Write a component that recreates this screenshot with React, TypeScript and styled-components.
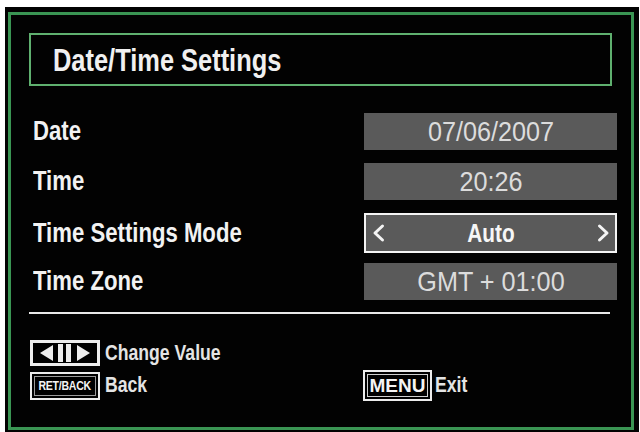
import { createGlobalStyle } from "styled-components";
import styled from "styled-components";

// The TV menu font is an Arial Narrow look-alike; Liberation Sans squeezed
// horizontally gives the same metrics (Narrow is ~82% of the regular width).
const GlobalStyle = createGlobalStyle`
    html, body
    {
        margin: 0;
        padding: 0;
        background: #ffffff;
    }

    body
    {
        width: 640px;
        height: 432px;
        overflow: hidden;
        font-family: "Liberation Sans", Arial, sans-serif;
    }
`;

interface ISetting
{
    label : string
    value : string
    selected? : boolean
}

const settings : ISetting[] =
[
    { label: "Date", value: "07/06/2007" },
    { label: "Time", value: "20:26" },
    { label: "Time Settings Mode", value: "Auto", selected: true },
    { label: "Time Zone", value: "GMT + 01:00" },
];

const Chevron = ({ dir } : { dir : "left" | "right" }) => (
    <svg width="13" height="20" viewBox="0 0 13 20">
        <polyline
            points={dir === "left" ? "10.5,3 3,10 10.5,17" : "2.5,3 10,10 2.5,17"}
            fill="none"
            stroke="#f4f4f4"
            strokeWidth="3"
            strokeLinecap="round"
            strokeLinejoin="round"
        />
    </svg>
);

const ArrowKeys = () => (
    <svg width="70" height="26" viewBox="0 0 70 26">
        <rect x="1.5" y="1.5" width="67" height="23" fill="#000" stroke="#ededed" strokeWidth="3" />
        <polygon points="10,13 23,5 23,21" fill="#ededed" />
        <rect x="28" y="4" width="5" height="18" fill="#ededed" />
        <rect x="36" y="4" width="5" height="18" fill="#ededed" />
        <polygon points="60,13 47,5 47,21" fill="#ededed" />
    </svg>
);

export default function App()
{
    return (
        <>
            <GlobalStyle />
            <Panel>
                <Frame>
                    <TitleBox>
                        <Title>Date/Time Settings</Title>
                    </TitleBox>

                    <Rows>
                        {settings.map(s => (
                            <Row key={s.label}>
                                <Label>{s.label}</Label>
                                <ValueBox selected={s.selected}>
                                    {s.selected && <Chevron dir="left" />}
                                    <Value selected={s.selected}>{s.value}</Value>
                                    {s.selected && <Chevron dir="right" />}
                                </ValueBox>
                            </Row>
                        ))}
                    </Rows>

                    <Separator />

                    <Legend>
                        <LegendItem>
                            <ArrowKeys />
                            <LegendText>Change Value</LegendText>
                        </LegendItem>
                        <LegendItem>
                            <KeyBox width="70px" height="28px">
                                <KeyInner small>
                                    <KeyLabel>RET/BACK</KeyLabel>
                                </KeyInner>
                            </KeyBox>
                            <LegendText>Back</LegendText>
                        </LegendItem>
                        <MenuItem>
                            <KeyBox width="69px" height="31px">
                                <KeyInner>MENU</KeyInner>
                            </KeyBox>
                            <LegendText>Exit</LegendText>
                        </MenuItem>
                    </Legend>
                </Frame>
            </Panel>
        </>
    );
}

const Panel = styled.div`
    box-sizing: border-box;
    margin: 7px 0 0 5px;
    width: 634px;
    height: 425px;
    padding: 5px 5px 2px 3px;
    background: #020202;
`;

const Frame = styled.div`
    box-sizing: border-box;
    height: 100%;
    border: 3px solid #3a9553;
    padding: 18px 14px 0 18px;
`;

const TitleBox = styled.div`
    box-sizing: border-box;
    display: flex;
    align-items: center;
    height: 53px;
    margin-right: 5px;
    padding: 3px 0 0 22px;
    border: 2px solid #5fb06f;
`;

const Narrow = styled.span<{ squeeze? : number, origin? : string }>`
    display: inline-block;
    white-space: nowrap;
    transform: scaleX(${props => props.squeeze ?? 0.82});
    transform-origin: ${props => props.origin ?? "left center"};
`;

const Title = styled(Narrow)`
    color: #f0f0f0;
    font-size: 31px;
    font-weight: bold;
`;

const Rows = styled.div`
    display: flex;
    flex-direction: column;
    gap: 13px;
    margin-top: 27px;
`;

const Row = styled.div`
    display: grid;
    grid-template-columns: 1fr 253px;
    align-items: center;
    height: 37px;
    padding-left: 4px;
`;

const Label = styled(Narrow)`
    color: #f2f2f2;
    font-size: 27px;
    font-weight: bold;
`;

const ValueBox = styled.div<{ selected? : boolean }>`
    box-sizing: border-box;
    display: flex;
    align-items: center;
    justify-content: space-between;
    height: ${props => props.selected ? "40px" : "37px"};
    padding: 0 5px 0 6px;
    background: #5a5a5a;
    border: ${props => props.selected ? "2px solid #f4f4f4" : "none"};
`;

const Value = styled(Narrow).attrs({ origin: "center" })<{ selected? : boolean }>`
    flex: 1;
    text-align: center;
    transform: scaleX(${props => props.selected ? 0.8 : 0.9});
    color: ${props => props.selected ? "#f6f6f6" : "#dcdcdc"};
    font-size: ${props => props.selected ? "26px" : "28px"};
    font-weight: ${props => props.selected ? "bold" : "normal"};
`;

const Separator = styled.div`
    width: 581px;
    height: 2px;
    margin-top: 12px;
    background: #e8e8e8;
`;

const Legend = styled.div`
    display: grid;
    grid-template-columns: 333px auto;
    grid-template-rows: 26px 31px;
    row-gap: 4px;
    margin-top: 26px;
    padding-left: 1px;
`;

const LegendItem = styled.div`
    grid-column: 1;
    display: flex;
    align-items: center;
    gap: 5px;
`;

const MenuItem = styled.div`
    grid-column: 2;
    grid-row: 2;
    display: flex;
    align-items: center;
    gap: 3px;
`;

const KeyBox = styled.div<{ width : string, height : string }>`
    box-sizing: border-box;
    display: flex;
    width: ${props => props.width};
    height: ${props => props.height};
    padding: 2px;
    border: 2px solid #ececec;
    background: #000;
`;

const KeyInner = styled.span<{ small? : boolean }>`
    flex: 1;
    display: flex;
    align-items: center;
    justify-content: center;
    overflow: hidden;
    border: 1px solid ${props => props.small ? "#9a9a9a" : "#cfcfcf"};
    color: #f4f4f4;
    font-weight: bold;
    font-size: ${props => props.small ? "13.5px" : "19px"};
`;

const KeyLabel = styled(Narrow).attrs({ origin: "center" })`
    transform: scaleX(0.78);
    letter-spacing: -0.3px;
`;

const LegendText = styled(Narrow)`
    color: #e4e4e4;
    font-size: 21.5px;
    font-weight: bold;
`;
